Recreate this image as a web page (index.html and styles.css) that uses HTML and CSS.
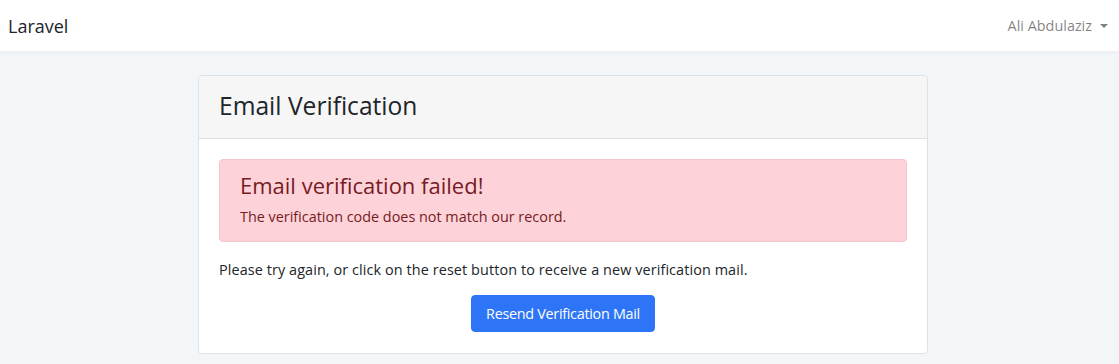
FILE: index.html
```html
<!DOCTYPE html>
<html lang="en">
<head>
  <meta charset="UTF-8">
  <meta name="viewport" content="width=device-width, initial-scale=1.0">
  <title>Email Verification</title>
  <link rel="stylesheet" href="styles.css">
</head>
<body>
  <nav class="navbar">
    <a class="brand" href="#">Laravel</a>
    <a class="user" href="#">Ali Abdulaziz <span class="caret"></span></a>
  </nav>

  <main class="page">
    <section class="card">
      <header class="card-header">
        <h3>Email Verification</h3>
      </header>
      <div class="card-body">
        <div class="alert">
          <h4>Email verification failed!</h4>
          <p>The verification code does not match our record.</p>
        </div>
        <p class="hint">Please try again, or click on the reset button to receive a new verification mail.</p>
        <div class="actions">
          <button class="btn" type="button">Resend Verification Mail</button>
        </div>
      </div>
    </section>
  </main>
</body>
</html>
```

FILE: styles.css
```css
body {
  margin: 0;
  padding: 0;
  box-sizing: border-box;
  font-family: "Open Sans", "Liberation Sans", sans-serif;
  font-size: 14.4px;
  color: #212529;
  background-color: #f3f6f9;
  min-height: 100vh;
}

a {
  text-decoration: none;
}

.navbar {
  display: flex;
  align-items: center;
  justify-content: space-between;
  height: 51px;
  padding: 0 11px 0 8px;
  background-color: #fff;
  box-shadow: 0 2px 4px rgba(0, 0, 0, 0.04);
}

.brand {
  color: #212529;
  font-size: 18px;
}

.user {
  display: flex;
  align-items: center;
  color: rgba(0, 0, 0, 0.5);
  font-size: 14.4px;
}

.caret {
  display: inline-block;
  margin-left: 8px;
  border-top: 4.5px solid rgba(0, 0, 0, 0.5);
  border-left: 4.5px solid transparent;
  border-right: 4.5px solid transparent;
}

.page {
  padding: 24px 0 0 198px;
}

.card {
  width: 730px;
  background-color: #fff;
  border: 1px solid #dfe1e4;
  border-radius: 4px;
  box-sizing: border-box;
}

.card-header {
  background-color: #f6f6f6;
  border-bottom: 1px solid #dfe1e4;
  padding: 0 20px 4px;
  box-sizing: border-box;
  height: 63px;
  display: flex;
  align-items: center;
  border-radius: 4px 4px 0 0;
}

.card-header h3 {
  margin: 0;
  font-size: 24.6px;
  font-weight: 400;
  color: #212529;
}

.card-body {
  padding: 20px 20px 21px;
}

.alert {
  background-color: #fdd3d9;
  border: 1px solid #f9c3cb;
  border-radius: 4px;
  color: #761b24;
  padding: 10px 20px 15px;
}

.alert h4 {
  margin: 0 0 7px;
  font-size: 22px;
  font-weight: 500;
}

.alert p {
  margin: 0;
}

.hint {
  margin: 18px 0 0;
  letter-spacing: 0.1px;
}

.actions {
  display: flex;
  justify-content: center;
  margin-top: 16px;
}

.btn {
  font-family: inherit;
  font-size: 14.4px;
  letter-spacing: -0.3px;
  white-space: nowrap;
  color: #fff;
  background-color: #2d74f6;
  border: 1px solid #2d74f6;
  border-radius: 4px;
  padding: 0;
  width: 184px;
  height: 37px;
  cursor: pointer;
}
```
